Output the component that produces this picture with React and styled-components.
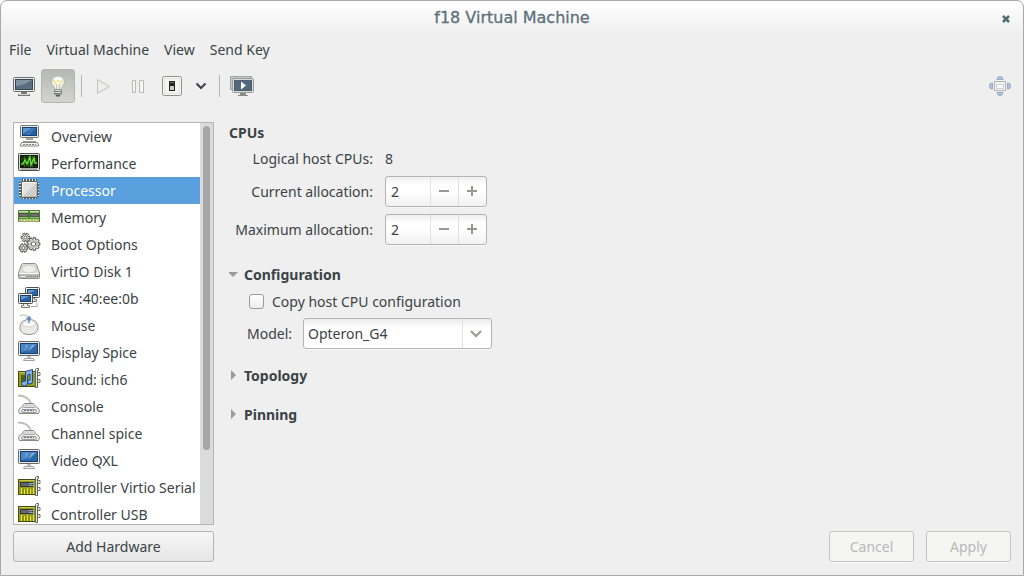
import React, { useState } from 'react'
import styled, { createGlobalStyle, css } from 'styled-components'

const GlobalStyle = createGlobalStyle`
    * {
        box-sizing: border-box;
    }
    body {
        margin: 0;
        background: #fff;
        color: #3b4346;
        font-family: "Noto Sans", "Open Sans", sans-serif;
        font-size: 14px;
        line-height: 20px;
    }
    button, input, select {
        margin: 0;
        color: inherit;
        font: inherit;
    }
`

const Window = styled.div`
    display: flex;
    flex-direction: column;
    height: 100vh;
    border: 1px solid #a9a9a9;
    border-radius: 7px 7px 0 0;
    background: linear-gradient(#fff, #efefef 34px);
    overflow: hidden;
`

const TitleBar = styled.header`
    display: grid;
    grid-template-columns: 28px 1fr 28px;
    align-items: center;
    height: 34px;
`

const Title = styled.h1`
    grid-column: 2;
    margin: 0;
    color: #5c7178;
    font-family: "DejaVu Sans", sans-serif;
    font-size: 16px;
    font-weight: 400;
    text-align: center;
    -webkit-text-stroke: 0.3px #5c7178;
`

const CloseButton = styled.button`
    display: flex;
    padding: 5px;
    border: 0;
    background: none;
`

const MenuBar = styled.nav`
    display: flex;
    gap: 15px;
    padding: 5px 8px;
`

const MenuItem = styled.button`
    padding: 0;
    border: 0;
    background: none;
`

const Toolbar = styled.div`
    display: flex;
    align-items: center;
    height: 34px;
    margin-top: 4px;
    padding: 0 6px;
`

const ToolButton = styled.button`
    display: flex;
    align-items: center;
    justify-content: center;
    width: ${({ $width }) => $width || 34}px;
    height: 34px;
    padding: 0;
    border: 1px solid transparent;
    border-radius: 3px;
    background: none;
    ${({ $active }) => $active && css`
        border-color: #b4b4b2;
        background: linear-gradient(#b6b8b5, #d3d4d2);
    `}
`

const Separator = styled.span`
    width: 1px;
    height: 22px;
    margin: 0 5px 0 6px;
    background: #b5b5b5;
`

const Spacer = styled.span`
    flex: 1;
`

const Body = styled.main`
    display: flex;
    flex: 1;
    gap: 15px;
    min-height: 0;
    padding: 19px 12px 13px;
`

const Sidebar = styled.aside`
    display: flex;
    flex-direction: column;
    gap: 6px;
    width: 201px;
    flex-shrink: 0;
`

const ListFrame = styled.div`
    display: flex;
    flex: 1;
    min-height: 0;
    border: 1px solid #b4b4b4;
    background: #fff;
    overflow: hidden;
`

const DeviceList = styled.ul`
    flex: 1;
    margin: 0;
    padding: 0;
    list-style: none;
`

const DeviceButton = styled.button`
    display: flex;
    align-items: center;
    gap: 10px;
    width: 100%;
    height: 27px;
    padding: 0 0 0 4px;
    border: 0;
    background: ${({ $selected }) => ($selected ? '#5a9fde' : '#fff')};
    color: ${({ $selected }) => ($selected ? '#fff' : 'inherit')};
    text-align: left;
    white-space: nowrap;

    svg {
        flex-shrink: 0;
        margin-bottom: 2px;
    }
`

const ScrollTrack = styled.div`
    width: 13px;
    padding: 3px;
    background: #dbdbdb;
`

const ScrollThumb = styled.div`
    height: 82%;
    border-radius: 4px;
    background: #a6a6a6;
`

const Button = styled.button`
    height: 31px;
    min-width: 85px;
    padding: 0 12px;
    border: 1px solid #b4b4b4;
    border-radius: 3px;
    background: linear-gradient(#f7f7f7, #e5e5e5);
    box-shadow: 0 1px 0 #f8f8f8;

    &:disabled {
        border-color: #c4c4c2;
        background: #f5f5f4;
        color: #b7bab7;
    }
`

const Details = styled.section`
    display: flex;
    flex-direction: column;
    flex: 1;
`

const Heading = styled.h2`
    margin: 0;
    font-size: 14px;
    font-weight: 700;
    line-height: 22px;
`

const CpuForm = styled.div`
    display: grid;
    grid-template-columns: 144px auto;
    justify-content: start;
    align-items: center;
    column-gap: 12px;
    row-gap: 7px;
    padding-top: 5px;
`

const CpuLabel = styled.label`
    text-align: right;
    white-space: nowrap;
`

const Spin = styled.div`
    display: flex;
    width: 102px;
    height: 31px;
    border: 1px solid #b4b4b4;
    border-radius: 3px;
    background: linear-gradient(#efefef, #fff 8px, #fff 14px, #f1f1f1);
    box-shadow: 0 1px 0 #f8f8f8;
    overflow: hidden;
`

const SpinInput = styled.input`
    flex: 1;
    min-width: 0;
    padding: 0 5px;
    border: 0;
    outline: 0;
    background: none;
`

const SpinButton = styled.button`
    display: flex;
    align-items: center;
    justify-content: center;
    width: 28px;
    padding: 0;
    border: 0;
    border-left: 1px solid #e0e0e0;
    background: none;
`

const Section = styled.section`
    margin-top: ${({ $gap }) => $gap}px;
`

const Expander = styled.button`
    display: flex;
    align-items: center;
    gap: 5px;
    padding: 0;
    border: 0;
    background: none;
    font-weight: 700;

    svg {
        margin-bottom: 2px;
    }
`

const ConfigRow = styled.div`
    display: flex;
    align-items: center;
    margin-top: ${({ $gap }) => $gap}px;
    padding-left: 18px;
`

const CheckBox = styled.input`
    appearance: none;
    width: 15px;
    height: 15px;
    margin: 0 8px 2px 2px;
    border: 1px solid #9b9b99;
    border-radius: 3px;
    background: linear-gradient(#fff, #ececec);

    &:checked {
        background: #5a9fde;
    }
`

const ModelLabel = styled.label`
    width: 56px;
`

const SelectBox = styled.div`
    position: relative;
    width: 189px;

    svg {
        position: absolute;
        top: 0;
        right: 0;
        pointer-events: none;
    }
`

const Select = styled.select`
    display: block;
    appearance: none;
    width: 100%;
    height: 31px;
    padding: 0 30px 0 4px;
    border: 1px solid #b4b4b4;
    border-radius: 3px;
    outline: 0;
    background: linear-gradient(#ececec, #fff 9px);
    box-shadow: 0 1px 0 #f8f8f8;
`

const Actions = styled.footer`
    display: flex;
    justify-content: flex-end;
    gap: 12px;
    margin-top: auto;
`

const Icon = ({ size = 23, children }) => (
    <svg width={size} height={size} viewBox={`0 0 ${size} ${size}`} aria-hidden="true">{children}</svg>
)

// device icons

const ComputerIcon = () => (
    <Icon>
        <rect x="2.500" y="1.500" width="18" height="12" rx="1" fill="#e8e9e4" stroke="#73756f" />
        <rect x="4.500" y="3.500" width="14" height="8" fill="#245f9f" stroke="#173e72" />
        <path d="M5 4h9L5 10z" fill="#5e96cf" />
        <path d="M14 4h4l-7 7H7z" fill="#3c78b8" />
        <path d="M8 14h7v2H8z" fill="#a3a59f" />
        <path d="M5 17.500h13" stroke="#9c9e98" />
        <path d="M3.500 18.500h16l1.500 3.500h-19z" fill="#f2f2f0" stroke="#8a8c86" />
        <path d="M5 20.500h13" stroke="#80827c" strokeDasharray="2 1" />
    </Icon>
)

const PerformanceIcon = () => (
    <Icon>
        <rect x="0.500" y="2.500" width="21" height="17" rx="1" fill="#d5d7d2" stroke="#4c4e4a" />
        <rect x="2.500" y="4.500" width="17" height="12" fill="#112b0a" stroke="#10180f" />
        <path d="M3 8h16M3 12h16M6.500 5v11M10.500 5v11M14.500 5v11" stroke="#315b19" />
        <path d="M3 13h2l2-4 2 4 3-7 1 8 3-7 1 5h2" fill="none" stroke="#67db31" strokeWidth="1.500" />
        <path d="M3 18h16" stroke="#7e817a" />
    </Icon>
)

const pins = 'M5.500 1v20M8.500 1v20M11.500 1v20M14.500 1v20M17.500 1v20M1 5.500h20M1 8.500h20M1 11.500h20M1 14.500h20M1 17.500h20'

const ProcessorIcon = () => (
    <Icon>
        <path d={pins} stroke="#4f4b3c" strokeWidth="2.500" />
        <path d={pins} stroke="#f1ecd8" strokeWidth="1" />
        <rect x="3.500" y="3.500" width="16" height="16" rx="1" fill="#cfd0ce" stroke="#5e5f58" />
        <path d="M5 5h13L5 18z" fill="#e2e2e1" />
        <path d="M4.500 18.500v-14h14" fill="none" stroke="#f6f6f5" />
        <path d="M5 18.500h13.500V5" fill="none" stroke="#b6b7b4" />
    </Icon>
)

const MemoryIcon = () => (
    <Icon>
        <path d="M.5 5.500h21v11h-21z" fill="#8fc46c" stroke="#4d7a3a" />
        <path d="M1 6.500h20" stroke="#c4dcae" />
        <rect x="1.500" y="8.500" width="8" height="3" fill="#746f6c" stroke="#55514f" />
        <rect x="12.500" y="8.500" width="8" height="3" fill="#746f6c" stroke="#55514f" />
        <path d="M11 6v8" stroke="#37902b" strokeWidth="2" />
        <path d="M1 13.500h20" stroke="#4b9c35" />
        <path d="M1 15.500h20" stroke="#efe8ad" strokeWidth="2" />
        <path d="M1.500 15.500h20" stroke="#7d8446" strokeWidth="2" strokeDasharray="1 2" />
    </Icon>
)

function gearPath(x, y, r, teeth) {
    const points = []
    for (let i = 0; i < teeth; i++) {
        const steps = [[-0.28, r], [0.28, r], [0.3, r - 1.5], [0.7, r - 1.5]]
        steps.forEach(([offset, radius]) => {
            const angle = ((i + offset) / teeth) * Math.PI * 2
            points.push(`${(x + Math.cos(angle) * radius).toFixed(2)} ${(y + Math.sin(angle) * radius).toFixed(2)}`)
        })
    }
    return `M${points.join('L')}z`
}

const Gear = ({ x, y, r, teeth }) => (
    <>
        <path d={gearPath(x, y, r, teeth)} fill="#e4e5e2" stroke="#51534f" />
        <circle cx={x} cy={y} r={r / 3} fill="#fff" stroke="#61635e" />
    </>
)

const GearsIcon = () => (
    <Icon>
        <Gear x={7.5} y={5.5} r={4.5} teeth={6} />
        <Gear x={5.5} y={16} r={4.5} teeth={6} />
        <Gear x={15.5} y={12} r={6.5} teeth={9} />
        <circle cx="15.500" cy="12" r="3.500" fill="none" stroke="#b3b5b0" />
    </Icon>
)

const DiskIcon = () => (
    <Icon>
        <path d="M5.500 4.500h11q1.500 0 2 1l3 8.500v4.500q0 1-1 1h-19q-1 0-1-1V14l3-8.500q.500-1 2-1z" fill="#dcdddb" stroke="#8b8d88" />
        <ellipse cx="11" cy="10" rx="7" ry="4" fill="#eeeeed" stroke="#c9cac7" />
        <path d="M1 14.500h20" stroke="#fff" />
        <path d="M1 15h20v4H1z" fill="#b4b6b2" />
        <path d="M2.500 17.500h5" stroke="#e8e8e7" />
        <path d="M9 17.500h11" stroke="#777974" strokeDasharray="1 1" />
    </Icon>
)

const NetworkIcon = () => (
    <Icon>
        {[[7, 1], [0, 7]].map(([x, y]) => (
            <g key={x} transform={`translate(${x} ${y})`}>
                <path d="M5.500 10.500h4v2h2v2h-8v-2h2z" fill="#ececea" stroke="#777973" />
                <rect x=".5" y=".5" width="14" height="10" rx="1" fill="#f3f3ef" stroke="#4f514c" />
                <rect x="2.500" y="2.500" width="10" height="6" fill="#2864a8" stroke="#173e72" />
                <path d="M3 3h8L3 7z" fill="#6498cf" />
            </g>
        ))}
        <path d="M13 20.500h6v-4" fill="none" stroke="#a9aba5" />
    </Icon>
)

const MouseIcon = () => (
    <Icon>
        <path d="M2 2.500q8-2 9 3" fill="none" stroke="#b5b7b2" />
        <path d="M11 6.500c6 0 9 3.500 9 8s-3.500 7-9 7-9-2.500-9-7 3-8 9-8z" fill="#e9e9e8" stroke="#8f918c" />
        <path d="M4 12q1-4 7-4.500t7 4.500q-7 4-14 0z" fill="#f8f8f7" stroke="#d2d3d0" />
        <path d="M8.500 4.500l2.500 2 2-2M11 3v7" fill="none" stroke="#5a8cc2" strokeWidth="1.500" />
    </Icon>
)

const DisplayIcon = () => (
    <Icon>
        <rect x=".5" y="1.500" width="21" height="14" rx="1" fill="#e8e9e5" stroke="#666863" />
        <rect x="2.500" y="3.500" width="17" height="10" fill="#2c68aa" stroke="#173e72" />
        <path d="M3 4h16q-5 6-16 8z" fill="#4c86c4" />
        <path d="M8 5h2l-3 6zM14 5h3l-7 7z" fill="#86aed9" />
        <path d="M9 16h4v3H9z" fill="#c0c2bd" />
        <path d="M6.500 18.500h9l1 2h-11z" fill="#f4f4f2" stroke="#a0a29d" />
    </Icon>
)

const CardBase = () => (
    <>
        <rect x=".5" y="4.500" width="17" height="15" fill="#999b1c" stroke="#464910" />
        <path d="M1.500 5.500h15" stroke="#c9cb55" />
        <path d="M18.500 1.500h2v2h-1v17h-2v-18z" fill="#e8e9e5" stroke="#62645e" />
        <path d="M20 5.500h2v3h-2M20 12.500h2v3h-2" fill="#eee" stroke="#73756f" />
    </>
)

const SoundIcon = () => (
    <Icon>
        <CardBase />
        <path d="M3 8h5v8H3z" fill="#5a5e12" />
        <path d="M7.500 4.500l7-2v12q0 2.500-2.500 2.500t-2.500-2 2.500-2V7l-2.500 1v8q0 3-3 3t-3-2.500 4-2.500z" fill="#84b2e6" stroke="#204a87" />
    </Icon>
)

const ControllerIcon = () => (
    <Icon>
        <CardBase />
        <path d="M3.500 13v6M6.500 14v5M9.500 13v6M12.500 14v5M15.500 13v6" stroke="#e3e93a" />
        <path d="M5 19v-5M8 19v-4M11 19v-5" stroke="#83880f" />
        <rect x="2.500" y="7.500" width="12" height="4" fill="#62656a" stroke="#34373a" />
        <path d="M11 8.500h5M11 10.500h5" stroke="#89a7ca" />
    </Icon>
)

const SerialIcon = () => (
    <Icon>
        <path d="M0 1.500q10 0 13 8" fill="none" stroke="#bcbeb9" strokeWidth="2" />
        <path d="M6.500 9.500h9l3 4 2 1 1 2-1 3h-19l-1-3 1-2 2-1z" fill="#f1f1ef" stroke="#888a85" />
        <path d="M7 10h8l2 3H5z" fill="#d9dad7" />
        <path d="M5 13.500h12" stroke="#a6a8a3" />
        <rect x="3.500" y="15.500" width="15" height="3" rx="1.500" fill="#e2e2e1" stroke="#9a9c98" />
        <path d="M6 16.500h10" stroke="#56749c" strokeDasharray="2 1" />
    </Icon>
)

// toolbar icons

const ConsoleIcon = () => (
    <Icon size={24}>
        <rect x="1.500" y="3.500" width="21" height="14" rx="1" fill="#e9eae8" stroke="#6c6e6b" />
        <rect x="3.500" y="5.500" width="17" height="10" fill="#5a6c82" stroke="#394855" />
        <path d="M4 6h16q-7 5-16 6z" fill="#8290a0" />
        <path d="M9 18h6v2h3v2H6v-2h3z" fill="#777976" />
        <path d="M7 20.500h10" stroke="#d7d8d6" />
    </Icon>
)

const BulbIcon = () => (
    <Icon size={24}>
        <path d="M12 2c-4 0-6.500 2.500-6.500 6 0 4 3.500 4.500 3.500 8h6c0-3.500 3.500-4 3.500-8 0-3.500-2.500-6-6.500-6z" fill="#ecece8" stroke="#b4b6b1" />
        <circle cx="12" cy="7.500" r="4.500" fill="#fdfdf8" />
        <path d="M7.500 6q2 4 4.500 0 2.500 4 4.500 0l-3 5h-3z" fill="#fffbe0" stroke="#eadb72" />
        <path d="M10.500 11v4M13.500 11v4" stroke="#c5c7c2" />
        <path d="M8.500 15.500h7v5h-7z" fill="#dfe0dd" stroke="#8f918d" />
        <path d="M8 17.500h8M9 19.500h6" stroke="#777975" />
        <path d="M10 21h4v1.500h-4z" fill="#575956" />
    </Icon>
)

const PlayIcon = () => (
    <Icon size={24}>
        <path d="M5.500 5.500l12 7-12 7z" fill="#ededec" stroke="#c0c1bf" />
    </Icon>
)

const PauseIcon = () => (
    <Icon size={24}>
        <path d="M6.500 6.500h3v12h-3zM13.500 6.500h4v12h-4z" fill="#f6f6f5" stroke="#b8b9b7" />
    </Icon>
)

const ShutdownIcon = () => (
    <Icon size={24}>
        <rect x="2.500" y="2.500" width="19" height="19" rx="2" fill="#fafafa" stroke="#8c8e8a" />
        <rect x="4.500" y="4.500" width="15" height="15" fill="#f3f3f2" stroke="#e2e2e0" />
        <rect x="9" y="7" width="6" height="10" fill="#242424" />
        <rect x="10" y="12" width="4" height="4" fill="#c9c9c9" />
        <path d="M10 8.500h4" stroke="#696969" />
    </Icon>
)

const SnapshotIcon = () => (
    <Icon size={26}>
        <rect x="1.500" y="3.500" width="21" height="13" fill="#c4c7c8" stroke="#a2a6a4" />
        <rect x="3.500" y="5.500" width="21" height="14" rx="1" fill="#d9dbd9" stroke="#9a9d99" />
        <rect x="5.500" y="7.500" width="17" height="10" fill="#52667c" stroke="#4f5f6e" />
        <path d="M12 8.500l5 4-5 4z" fill="#fff" />
        <path d="M11 20h6v2h2v1H9v-1h2z" fill="#898b87" />
    </Icon>
)

const FullscreenIcon = () => (
    <Icon size={24}>
        <g fill="#b4c6dd" stroke="#92a9c7">
            <path d="M9 5.500q0-3 3-3t3 3zM9 18.500q0 3 3 3t3-3zM4.500 9q-3 0-3 3t3 3zM19.500 9q3 0 3 3t-3 3z" />
        </g>
        <rect x="6.500" y="7.500" width="11" height="9" fill="#f1f1ef" stroke="#b7b8b4" />
        <rect x="8.500" y="10.500" width="7" height="4" fill="#f8f8f8" stroke="#d3d4d1" />
    </Icon>
)

const Chevron = ({ color }) => (
    <Icon size={16}>
        <path d="M3.500 5.500L8 10l4.500-4.500" fill="none" stroke={color} strokeWidth="2" />
    </Icon>
)

const devices = [
    { name: 'Overview', icon: ComputerIcon },
    { name: 'Performance', icon: PerformanceIcon },
    { name: 'Processor', icon: ProcessorIcon },
    { name: 'Memory', icon: MemoryIcon },
    { name: 'Boot Options', icon: GearsIcon },
    { name: 'VirtIO Disk 1', icon: DiskIcon },
    { name: 'NIC :40:ee:0b', icon: NetworkIcon },
    { name: 'Mouse', icon: MouseIcon },
    { name: 'Display Spice', icon: DisplayIcon },
    { name: 'Sound: ich6', icon: SoundIcon },
    { name: 'Console', icon: SerialIcon },
    { name: 'Channel spice', icon: SerialIcon },
    { name: 'Video QXL', icon: DisplayIcon },
    { name: 'Controller Virtio Serial', icon: ControllerIcon },
    { name: 'Controller USB', icon: ControllerIcon },
]

function SpinBox({ id }) {
    const [value, setValue] = useState(2)

    return (
        <Spin>
            <SpinInput id={id} type="text" inputMode="numeric" value={value} onChange={(e) => setValue(Number(e.target.value) || 0)} />
            <SpinButton type="button" aria-label="Decrease" onClick={() => setValue(value - 1)}>
                <Icon size={12}><path d="M0 5h10" stroke="#969993" strokeWidth="2" /></Icon>
            </SpinButton>
            <SpinButton type="button" aria-label="Increase" onClick={() => setValue(value + 1)}>
                <Icon size={12}><path d="M0 5h10M5 0v10" stroke="#969993" strokeWidth="2" /></Icon>
            </SpinButton>
        </Spin>
    )
}

function ExpanderButton({ open, children }) {
    return (
        <Expander type="button" aria-expanded={!!open}>
            <Icon size={10}>
                <path d={open ? 'M-1 3h10L4 8z' : 'M2 0l5 5-5 5z'} fill="#999b96" />
            </Icon>
            {children}
        </Expander>
    )
}

function App() {
    const [selected, setSelected] = useState('Processor')

    return (
        <>
            <GlobalStyle />
            <Window>
                <TitleBar>
                    <Title>f18 Virtual Machine</Title>
                    <CloseButton type="button" aria-label="Close">
                        <Icon size={12}><path d="M3 4l6 6M9 4l-6 6" stroke="#536a72" strokeWidth="2.500" /></Icon>
                    </CloseButton>
                </TitleBar>
                <MenuBar>
                    <MenuItem type="button">File</MenuItem>
                    <MenuItem type="button">Virtual Machine</MenuItem>
                    <MenuItem type="button">View</MenuItem>
                    <MenuItem type="button">Send Key</MenuItem>
                </MenuBar>
                <Toolbar>
                    <ToolButton type="button" aria-label="Console"><ConsoleIcon /></ToolButton>
                    <ToolButton type="button" aria-label="Details" $active><BulbIcon /></ToolButton>
                    <Separator />
                    <ToolButton type="button" aria-label="Run" disabled><PlayIcon /></ToolButton>
                    <ToolButton type="button" aria-label="Pause" disabled><PauseIcon /></ToolButton>
                    <ToolButton type="button" aria-label="Shut down"><ShutdownIcon /></ToolButton>
                    <ToolButton type="button" aria-label="Shut down options" $width={24}><Chevron color="#3b4346" /></ToolButton>
                    <Separator />
                    <ToolButton type="button" aria-label="Snapshots"><SnapshotIcon /></ToolButton>
                    <Spacer />
                    <ToolButton type="button" aria-label="Fullscreen" disabled><FullscreenIcon /></ToolButton>
                </Toolbar>
                <Body>
                    <Sidebar>
                        <ListFrame>
                            <DeviceList>
                                {devices.map(({ name, icon: DeviceIcon }) => (
                                    <li key={name}>
                                        <DeviceButton type="button" $selected={name === selected} onClick={() => setSelected(name)}>
                                            <DeviceIcon />
                                            {name}
                                        </DeviceButton>
                                    </li>
                                ))}
                            </DeviceList>
                            <ScrollTrack><ScrollThumb /></ScrollTrack>
                        </ListFrame>
                        <Button type="button">Add Hardware</Button>
                    </Sidebar>
                    <Details>
                        <Heading>CPUs</Heading>
                        <CpuForm>
                            <CpuLabel as="span">Logical host CPUs:</CpuLabel>
                            <span>8</span>
                            <CpuLabel htmlFor="current">Current allocation:</CpuLabel>
                            <SpinBox id="current" />
                            <CpuLabel htmlFor="maximum">Maximum allocation:</CpuLabel>
                            <SpinBox id="maximum" />
                        </CpuForm>
                        <Section $gap={20}>
                            <ExpanderButton open>Configuration</ExpanderButton>
                            <ConfigRow $gap={7}>
                                <CheckBox id="copy-host" type="checkbox" />
                                <label htmlFor="copy-host">Copy host CPU configuration</label>
                            </ConfigRow>
                            <ConfigRow $gap={6}>
                                <ModelLabel htmlFor="model">Model:</ModelLabel>
                                <SelectBox>
                                    <Select id="model" defaultValue="Opteron_G4">
                                        <option>Opteron_G4</option>
                                    </Select>
                                    <svg width="30" height="31" viewBox="0 0 30 31" aria-hidden="true">
                                        <path d="M.5 1v29" stroke="#e0e0e0" />
                                        <path d="M9 13l5 5 5-5" fill="none" stroke="#969993" strokeWidth="2" />
                                    </svg>
                                </SelectBox>
                            </ConfigRow>
                        </Section>
                        <Section $gap={17}>
                            <ExpanderButton>Topology</ExpanderButton>
                        </Section>
                        <Section $gap={19}>
                            <ExpanderButton>Pinning</ExpanderButton>
                        </Section>
                        <Actions>
                            <Button type="button" disabled>Cancel</Button>
                            <Button type="button" disabled>Apply</Button>
                        </Actions>
                    </Details>
                </Body>
            </Window>
        </>
    )
}

export default App
